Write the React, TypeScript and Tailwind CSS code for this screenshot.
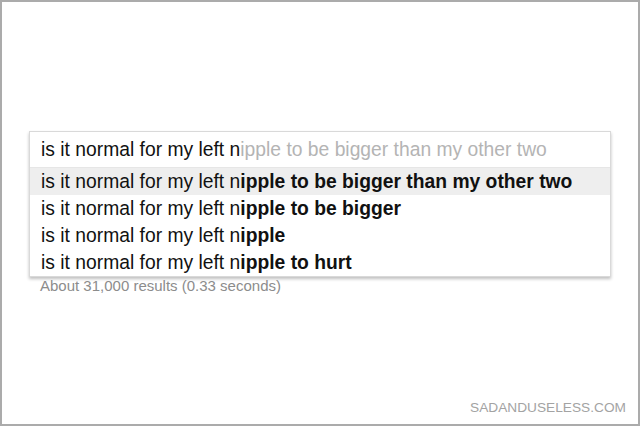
const prefix = "is it normal for my left n";

const suggestions = [
  "ipple to be bigger than my other two",
  "ipple to be bigger",
  "ipple",
  "ipple to hurt",
];

export default function App() {
  return (
    <div
      className="w-[640px] h-[426px] bg-white border-2 border-[#ababab] flex flex-col"
      style={{ fontFamily: '"Liberation Sans", Arial, sans-serif' }}
    >
      <div className="pt-[129px] pl-[27px]">
        {/* Search box with autocomplete */}
        <div className="w-[582px] border border-[#d9d9d9] bg-white shadow-[0_2px_3px_rgba(0,0,0,0.25)]">
          <div className="h-[35px] flex items-center pl-[11px] pt-[2px] text-[19.3px] text-[#111]">
            <span>{prefix}</span>
            <span className="text-[#b4b4b4]">{suggestions[0]}</span>
          </div>
          <div className="border-t border-[#e6e6e6]">
            {suggestions.map((s, i) => (
              <div
                key={i}
                className={`h-[27px] flex items-center pl-[11px] pt-[1px] text-[19.3px] text-[#111] ${
                  i === 0 ? "bg-[#eeeeee]" : ""
                }`}
              >
                <span>{prefix}</span>
                <span className="font-bold">{s}</span>
              </div>
            ))}
          </div>
        </div>
        <div className="pl-[11px] text-[15px] leading-[17px] text-[#8c8c8c] whitespace-nowrap">
          About 31,000 results (0.33 seconds)
        </div>
      </div>

      <div className="mt-auto flex justify-end pr-[12px] pb-[8px] text-[13.7px] leading-[16px] text-[#a3a3a3]">
        SADANDUSELESS.COM
      </div>
    </div>
  );
}
